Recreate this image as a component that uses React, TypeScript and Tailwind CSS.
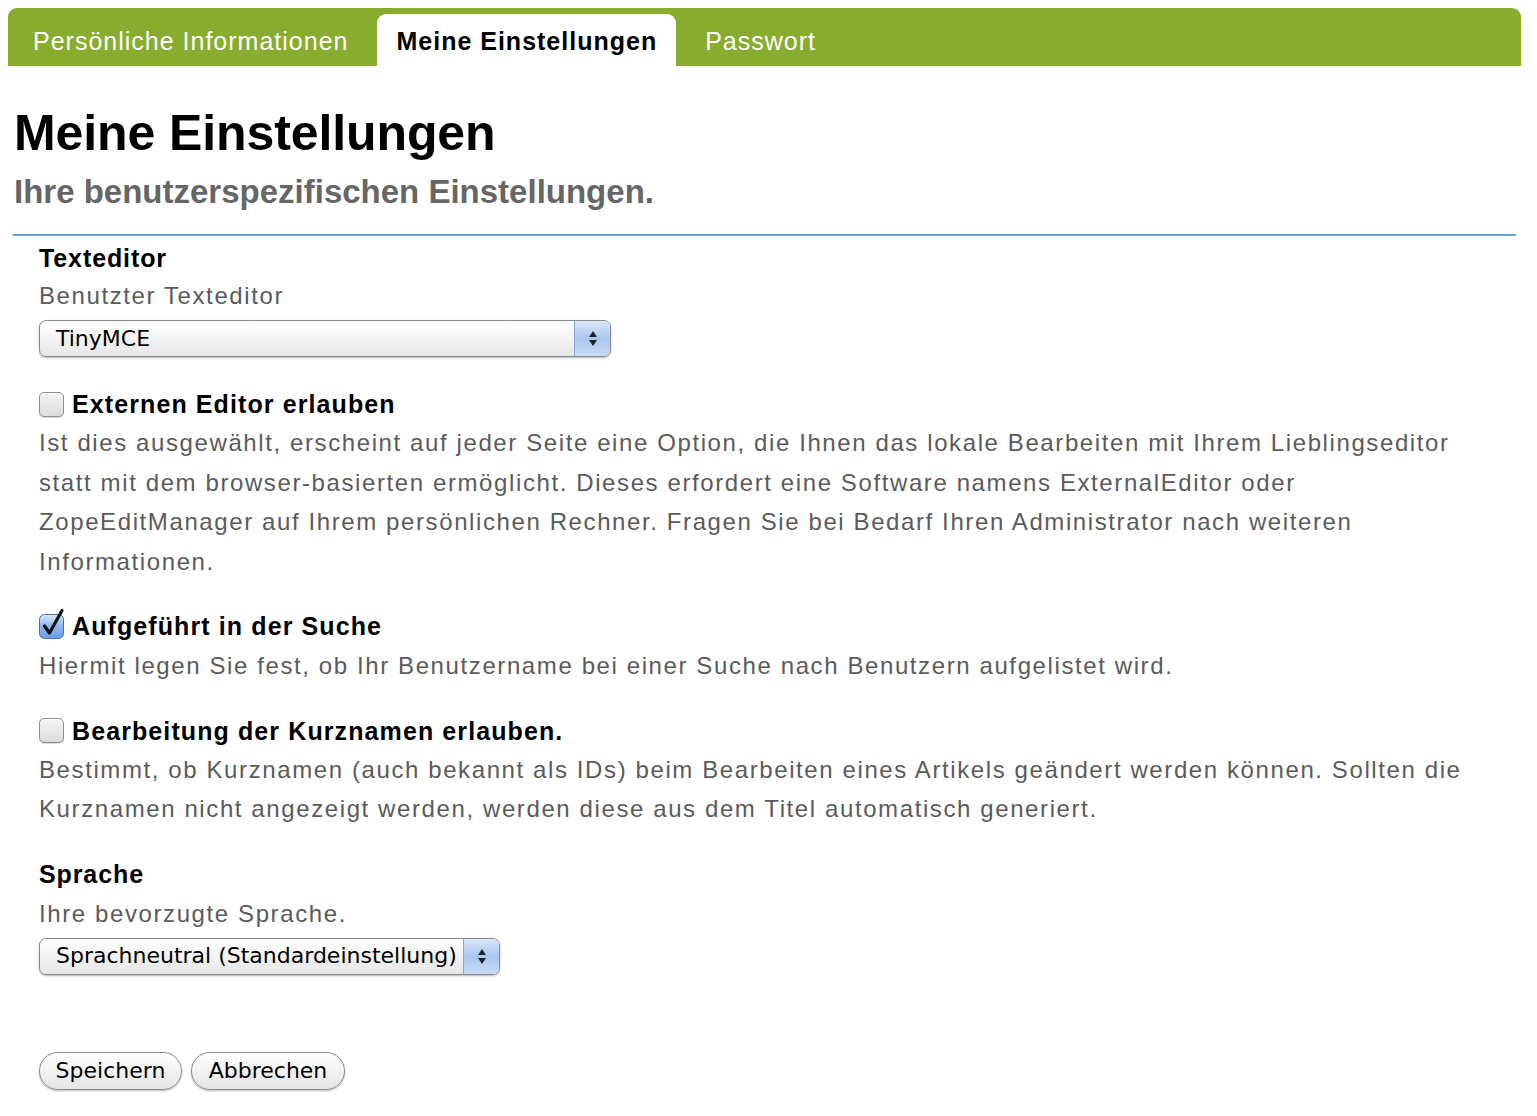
import type { ReactNode } from 'react';

const tabs = [
  { label: 'Persönliche Informationen', active: false },
  { label: 'Meine Einstellungen', active: true },
  { label: 'Passwort', active: false },
];

function Checkbox({ checked }: { checked?: boolean }) {
  if (checked) {
    return (
      <svg width="25" height="30" viewBox="0 0 25 30" className="-mt-[5px] shrink-0 overflow-visible">
        <defs>
          <linearGradient id="cbBlue" x1="0" y1="0" x2="0" y2="1">
            <stop offset="0" stopColor="#d7e6fb" />
            <stop offset="0.5" stopColor="#8db6ee" />
            <stop offset="1" stopColor="#6b9de6" />
          </linearGradient>
        </defs>
        <rect x="0.5" y="5.5" width="24" height="24" rx="5" fill="url(#cbBlue)" stroke="#4d6fa8" strokeWidth="1" />
        <path d="M5.5 17 L10.5 24 L23 1.5" fill="none" stroke="#111" strokeWidth="3.2" strokeLinecap="round" strokeLinejoin="round" />
      </svg>
    );
  }
  return (
    <span className="block h-[25px] w-[25px] shrink-0 rounded-[5px] border border-[#8e8e8e] bg-gradient-to-b from-[#f4f4f4] to-[#dcdcdc] shadow-[inset_0_1px_1px_rgba(255,255,255,0.9),0_1px_1px_rgba(0,0,0,0.15)]" />
  );
}

function Select({ value, width }: { value: string; width: string }) {
  return (
    <div
      className={`${width} flex h-[37px] overflow-hidden rounded-[7px] border border-[#8a8a8a] bg-gradient-to-b from-[#ffffff] via-[#f3f3f3] to-[#e6e6e6] shadow-[0_1px_2px_rgba(0,0,0,0.3)]`}
    >
      <div className="flex flex-1 items-center whitespace-nowrap pl-[16px] font-['DejaVu_Sans',sans-serif] text-[22px] leading-none tracking-normal text-black">
        {value}
      </div>
      <div className="flex w-[36px] flex-col items-center justify-center gap-[3px] border-l border-[#8aa8d6] bg-gradient-to-b from-[#dbe8f9] via-[#a9c6ef] to-[#c8dcf6]">
        <span className="h-0 w-0 border-x-[4px] border-b-[6px] border-x-transparent border-b-[#222]" />
        <span className="h-0 w-0 border-x-[4px] border-t-[6px] border-x-transparent border-t-[#222]" />
      </div>
    </div>
  );
}

function Button({ children, width }: { children: ReactNode; width: string }) {
  return (
    <button
      className={`${width} h-[38px] rounded-full border border-[#8c8c8c] bg-gradient-to-b from-[#ffffff] via-[#f2f2f2] to-[#e4e4e4] font-['DejaVu_Sans',sans-serif] text-[22px] leading-none text-black shadow-[0_1px_2px_rgba(0,0,0,0.3)]`}
    >
      {children}
    </button>
  );
}

export default function App() {
  return (
    <div className="min-h-[1116px] bg-white pb-[20px] font-['Liberation_Sans',Arial,sans-serif]">
      <nav className="mx-[8px] mr-[16px] mt-[8px] flex h-[58px] items-end gap-[9px] rounded-t-[9px] bg-[#88ac2e] pl-[5px]">
        {tabs.map((tab) => (
          <div
            key={tab.label}
            className={
              tab.active
                ? 'flex h-[52px] items-center rounded-t-[9px] bg-white px-[19px] pt-[3px] text-[25px] font-bold tracking-[1px] text-black'
                : 'flex h-[52px] items-center px-[20px] pt-[3px] text-[25px] tracking-[1px] text-white'
            }
          >
            {tab.label}
          </div>
        ))}
      </nav>

      <div className="ml-[13px] mr-[21px]">
        <h1 className="mt-[42px] ml-[1px] text-[50px] font-bold leading-none tracking-[-0.1px] text-black">
          Meine Einstellungen
        </h1>
        <p className="mt-[17px] ml-[1px] text-[33px] font-bold leading-none text-[#666]">
          Ihre benutzerspezifischen Einstellungen.
        </p>
        <div className="mt-[26px] h-[2px] bg-[#6aa2d6]" />

        <div className="pl-[26px] text-[24px] leading-[39.5px] tracking-[1.6px] text-[#5b5b5b]">
          <div className="mt-[3px] text-[25px] font-bold leading-[38px] tracking-[0.9px] text-black">Texteditor</div>
          <div className="leading-[38px]">Benutzter Texteditor</div>
          <div className="mt-[5px]">
            <Select value="TinyMCE" width="w-[572px]" />
          </div>

          <div className="mt-[28px] flex items-center gap-[8px]">
            <Checkbox />
            <span className="text-[25px] font-bold leading-[38px] tracking-[1.1px] text-black">Externen Editor erlauben</span>
          </div>
          <p>
            Ist dies ausgewählt, erscheint auf jeder Seite eine Option, die Ihnen das lokale Bearbeiten mit Ihrem Lieblingseditor
            <br />
            statt mit dem browser-basierten ermöglicht. Dieses erfordert eine Software namens ExternalEditor oder
            <br />
            ZopeEditManager auf Ihrem persönlichen Rechner. Fragen Sie bei Bedarf Ihren Administrator nach weiteren
            <br />
            Informationen.
          </p>

          <div className="mt-[26px] flex items-center gap-[8px]">
            <Checkbox checked />
            <span className="text-[25px] font-bold leading-[38px] tracking-[1.1px] text-black">Aufgeführt in der Suche</span>
          </div>
          <p className="mt-[1px]">Hiermit legen Sie fest, ob Ihr Benutzername bei einer Suche nach Benutzern aufgelistet wird.</p>

          <div className="mt-[26px] flex items-center gap-[8px]">
            <Checkbox />
            <span className="text-[25px] font-bold leading-[38px] tracking-[1.1px] text-black">Bearbeitung der Kurznamen erlauben.</span>
          </div>
          <p>
            Bestimmt, ob Kurznamen (auch bekannt als IDs) beim Bearbeiten eines Artikels geändert werden können. Sollten die
            <br />
            Kurznamen nicht angezeigt werden, werden diese aus dem Titel automatisch generiert.
          </p>

          <div className="mt-[26px] text-[25px] font-bold leading-[38px] tracking-[0.9px] text-black">Sprache</div>
          <div className="mt-[2px] leading-[38px]">Ihre bevorzugte Sprache.</div>
          <div className="mt-[5px]">
            <Select value="Sprachneutral (Standardeinstellung)" width="w-[461px]" />
          </div>

          <div className="mt-[77px] flex gap-[9px] tracking-normal">
            <Button width="w-[143px]">Speichern</Button>
            <Button width="w-[154px]">Abbrechen</Button>
          </div>
        </div>
      </div>
    </div>
  );
}
